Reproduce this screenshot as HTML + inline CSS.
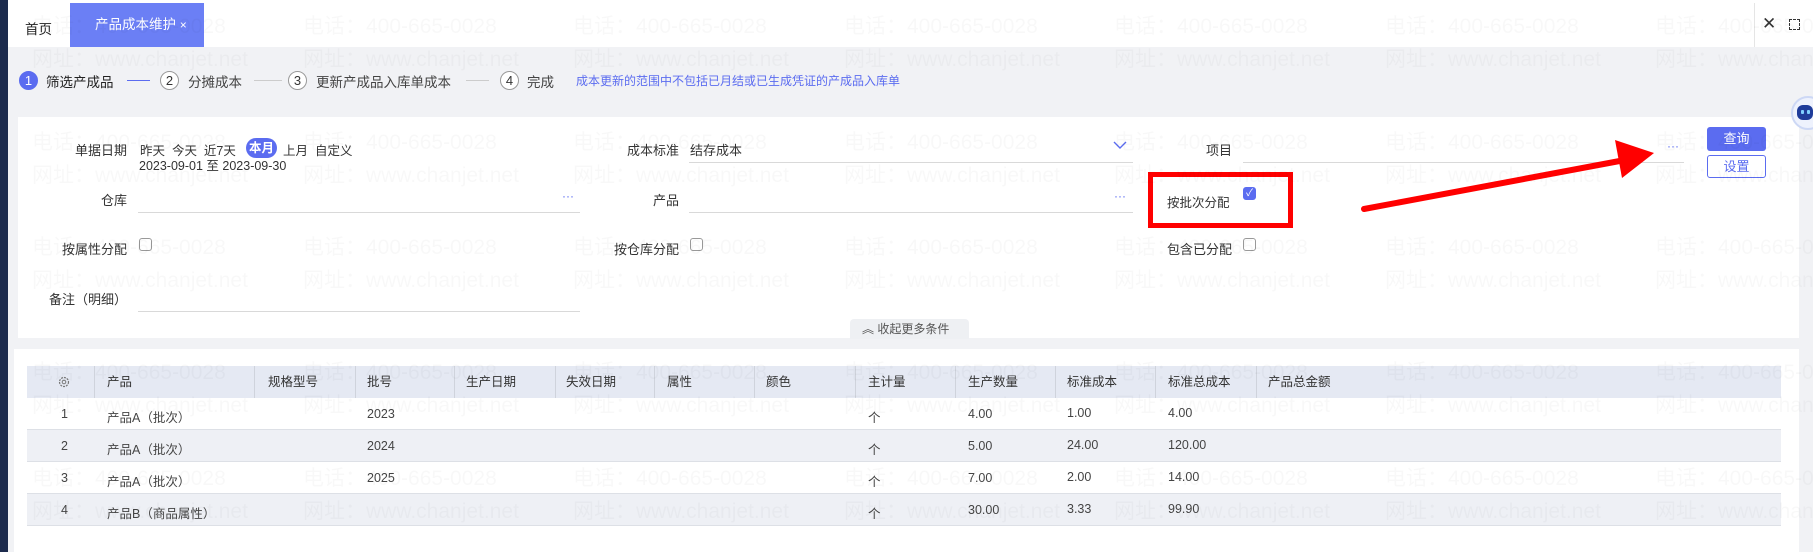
<!DOCTYPE html>
<html><head><meta charset="utf-8"><style>
*{margin:0;padding:0;box-sizing:border-box}
body{width:1813px;height:552px;overflow:hidden;background:#f1f2f5;font-family:"Liberation Sans","Noto Sans CJK SC",sans-serif;font-size:13px;color:#333;position:relative}
.a{position:absolute;white-space:nowrap}
.wm{position:absolute;font-size:21px;color:rgba(0,0,0,0.028);white-space:nowrap;line-height:33px;z-index:5;pointer-events:none}
.lbl{position:absolute;text-align:right;width:120px}
.ul{position:absolute;height:1px;background:#d9d9d9}
.dots{position:absolute;color:#5b6cf0;font-size:12px;letter-spacing:0px}
.cb{position:absolute;width:13px;height:13px;border:1px solid #999;border-radius:3px;background:#fff}
.circ{position:absolute;width:19px;height:19px;border:1px solid #999;border-radius:50%;text-align:center;line-height:17px;font-size:13px;color:#333;top:71px;background:#fff}
.th{position:absolute;top:366px;height:32px;line-height:32px;font-size:12.5px;color:#333}
.bd{position:absolute;top:366px;width:1px;height:32px;background:#cfd3dc}
.td{position:absolute;font-size:12.5px;color:#444}
</style></head><body>
<div class="a" style="left:0;top:0;width:8px;height:552px;background:#1c2b4d"></div>
<div class="a" style="left:8px;top:0;width:1805px;height:47px;background:#fff"></div>
<div class="a" style="left:25px;top:18px;font-size:13.5px;color:#222">首页</div>
<div class="a" style="left:70px;top:3px;width:134px;height:44px;background:#6b7ff5;color:#fff;font-size:13.5px;line-height:44px;padding-left:25px">产品成本维护 <span style="font-size:12px">×</span></div>
<div class="a" style="left:1754px;top:3px;width:1px;height:44px;background:#e5e5e5"></div>
<div class="a" style="left:1762px;top:14px;font-size:17px;color:#333">✕</div>
<div class="a" style="left:1789px;top:19px;width:11px;height:11px;border:1.5px dashed #333"></div>

<!-- steps -->
<div class="circ" style="left:19px;background:#5b6cf0;border-color:#5b6cf0;color:#fff">1</div>
<div class="a" style="left:46px;top:71px;font-size:13.5px;color:#222">筛选产成品</div>
<div class="a" style="left:127px;top:80px;width:23px;height:1px;background:#5b6cf0"></div>
<div class="circ" style="left:160px">2</div>
<div class="a" style="left:188px;top:71px;font-size:13.5px;color:#444">分摊成本</div>
<div class="a" style="left:254px;top:80px;width:28px;height:1px;background:#ccc"></div>
<div class="circ" style="left:288px">3</div>
<div class="a" style="left:316px;top:71px;font-size:13.5px;color:#444">更新产成品入库单成本</div>
<div class="a" style="left:466px;top:80px;width:23px;height:1px;background:#ccc"></div>
<div class="circ" style="left:500px">4</div>
<div class="a" style="left:527px;top:71px;font-size:13.5px;color:#444">完成</div>
<div class="a" style="left:576px;top:72px;font-size:12px;color:#5b6cf0">成本更新的范围中不包括已月结或已生成凭证的产成品入库单</div>

<!-- filter panel -->
<div class="a" style="left:18px;top:117px;width:1781px;height:221px;background:#fff"></div>
<div class="lbl" style="left:7px;top:140px">单据日期</div>
<div class="a" style="left:140px;top:140px;font-size:12.5px;color:#333">昨天&nbsp;&nbsp;今天&nbsp;&nbsp;近7天</div>
<div class="a" style="left:246px;top:138px;width:31px;height:20px;border-radius:10px;background:#5b6cf0;color:#fff;text-align:center;line-height:20px;font-size:12.5px;font-weight:bold">本月</div>
<div class="a" style="left:283px;top:140px;font-size:12.5px">上月&nbsp;&nbsp;自定义</div>
<div class="a" style="left:139px;top:155px;font-size:12.5px">2023-09-01 至 2023-09-30</div>

<div class="lbl" style="left:7px;top:190px">仓库</div>
<div class="ul" style="left:138px;top:212px;width:442px"></div>
<div class="dots" style="left:562px;top:189px">···</div>

<div class="lbl" style="left:559px;top:140px">成本标准</div>
<div class="a" style="left:690px;top:140px">结存成本</div>
<svg class="a" style="left:1113px;top:141px" width="14" height="9"><polyline points="1,1 7,7 13,1" fill="none" stroke="#5b6cf0" stroke-width="1.4"/></svg>
<div class="ul" style="left:689px;top:162px;width:444px"></div>
<div class="lbl" style="left:559px;top:190px">产品</div>
<div class="ul" style="left:689px;top:212px;width:444px"></div>
<div class="dots" style="left:1114px;top:189px">···</div>

<div class="lbl" style="left:1112px;top:140px">项目</div>
<div class="ul" style="left:1243px;top:162px;width:441px"></div>
<div class="dots" style="left:1667px;top:139px">···</div>

<div class="a" style="left:1167px;top:192px;font-size:12.5px">按批次分配</div>
<div class="cb" style="left:1243px;top:187px;background:#5b6cf0;border-color:#5b6cf0;color:#fff;font-size:10px;line-height:11px;text-align:center">✓</div>
<div class="a" style="left:1148px;top:172px;width:145px;height:56px;border:5px solid #f00"></div>

<div class="a" style="left:1707px;top:127px;width:59px;height:24px;background:#5b6cf0;border-radius:3px;color:#fff;text-align:center;line-height:24px">查询</div>
<div class="a" style="left:1707px;top:155px;width:59px;height:23px;border:1px solid #5b6cf0;border-radius:3px;color:#5b6cf0;text-align:center;line-height:21px">设置</div>

<div class="lbl" style="left:7px;top:239px">按属性分配</div>
<div class="cb" style="left:139px;top:238px"></div>
<div class="lbl" style="left:559px;top:239px">按仓库分配</div>
<div class="cb" style="left:690px;top:238px"></div>
<div class="lbl" style="left:1112px;top:239px">包含已分配</div>
<div class="cb" style="left:1243px;top:238px"></div>

<div class="lbl" style="left:7px;top:289px">备注（明细）</div>
<div class="ul" style="left:138px;top:311px;width:442px"></div>

<div class="a" style="left:850px;top:319px;width:119px;height:20px;background:#eef0f3;border-radius:4px 4px 0 0;font-size:12px;color:#555;line-height:20px;padding-left:12px">︽ 收起更多条件</div>

<!-- arrow -->
<svg class="a" style="left:0;top:0;z-index:6" width="1813" height="552"><line x1="1364" y1="209" x2="1625" y2="160" stroke="#f00" stroke-width="6" stroke-linecap="round"/><polygon points="1654,153 1615,140 1622,178" fill="#f00"/></svg>

<!-- robot -->
<div class="a" style="left:1791px;top:96px;width:34px;height:34px;border-radius:50%;background:#eef2fd;border:2px solid #cdd8f5"></div>
<div class="a" style="left:1797px;top:105px;width:16px;height:15px;border-radius:6px;background:#1f3c9a"></div>
<div class="a" style="left:1801px;top:110px;width:3px;height:4px;border-radius:1px;background:#7fd0ff"></div>
<div class="a" style="left:1807px;top:110px;width:3px;height:4px;border-radius:1px;background:#7fd0ff"></div>

<!-- table panel -->
<div class="a" style="left:14px;top:349px;width:1785px;height:203px;background:#fff"></div>
<div class="a" style="left:27px;top:366px;width:1754px;height:32px;background:#e5e9f3"></div>
<div class="a" style="left:27px;top:430px;width:1754px;height:32px;background:#eef0f5"></div>
<div class="a" style="left:27px;top:494px;width:1754px;height:32px;background:#eef0f5"></div>
<div class="a" style="left:27px;top:429px;width:1754px;height:1px;background:#dde0e6"></div>
<div class="a" style="left:27px;top:461px;width:1754px;height:1px;background:#dde0e6"></div>
<div class="a" style="left:27px;top:493px;width:1754px;height:1px;background:#dde0e6"></div>
<div class="a" style="left:27px;top:525px;width:1754px;height:1px;background:#dde0e6"></div>
<svg class="a" style="left:58px;top:376px" width="12" height="12"><circle cx="6" cy="6" r="4.5" fill="none" stroke="#777" stroke-width="1.2" stroke-dasharray="2 1"/><circle cx="6" cy="6" r="1.8" fill="none" stroke="#777" stroke-width="1"/></svg>
<div class="bd" style="left:94px"></div><div class="th" style="left:107px">产品</div>
<div class="bd" style="left:254px"></div><div class="th" style="left:268px">规格型号</div>
<div class="bd" style="left:355px"></div><div class="th" style="left:367px">批号</div>
<div class="bd" style="left:454px"></div><div class="th" style="left:466px">生产日期</div>
<div class="bd" style="left:555px"></div><div class="th" style="left:566px">失效日期</div>
<div class="bd" style="left:654px"></div><div class="th" style="left:667px">属性</div>
<div class="bd" style="left:754px"></div><div class="th" style="left:766px">颜色</div>
<div class="bd" style="left:855px"></div><div class="th" style="left:868px">主计量</div>
<div class="bd" style="left:955px"></div><div class="th" style="left:968px">生产数量</div>
<div class="bd" style="left:1055px"></div><div class="th" style="left:1067px">标准成本</div>
<div class="bd" style="left:1155px"></div><div class="th" style="left:1168px">标准总成本</div>
<div class="bd" style="left:1256px"></div><div class="th" style="left:1268px">产品总金额</div>

<div class="td" style="left:61px;top:407px">1</div><div class="td" style="left:107px;top:407px">产品A（批次）</div><div class="td" style="left:367px;top:407px">2023</div><div class="td" style="left:868px;top:407px">个</div><div class="td" style="left:968px;top:407px">4.00</div><div class="td" style="left:1067px;top:406px">1.00</div><div class="td" style="left:1168px;top:406px">4.00</div>
<div class="td" style="left:61px;top:439px">2</div><div class="td" style="left:107px;top:439px">产品A（批次）</div><div class="td" style="left:367px;top:439px">2024</div><div class="td" style="left:868px;top:439px">个</div><div class="td" style="left:968px;top:439px">5.00</div><div class="td" style="left:1067px;top:438px">24.00</div><div class="td" style="left:1168px;top:438px">120.00</div>
<div class="td" style="left:61px;top:471px">3</div><div class="td" style="left:107px;top:471px">产品A（批次）</div><div class="td" style="left:367px;top:471px">2025</div><div class="td" style="left:868px;top:471px">个</div><div class="td" style="left:968px;top:471px">7.00</div><div class="td" style="left:1067px;top:470px">2.00</div><div class="td" style="left:1168px;top:470px">14.00</div>
<div class="td" style="left:61px;top:503px">4</div><div class="td" style="left:107px;top:503px">产品B（商品属性）</div><div class="td" style="left:868px;top:503px">个</div><div class="td" style="left:968px;top:503px">30.00</div><div class="td" style="left:1067px;top:502px">3.33</div><div class="td" style="left:1168px;top:502px">99.90</div>

<!-- watermarks -->
<div class="wm" style="left:32px;top:10px">电话：400-665-0028<br>网址：www.chanjet.net</div>
<div class="wm" style="left:303px;top:10px">电话：400-665-0028<br>网址：www.chanjet.net</div>
<div class="wm" style="left:573px;top:10px">电话：400-665-0028<br>网址：www.chanjet.net</div>
<div class="wm" style="left:844px;top:10px">电话：400-665-0028<br>网址：www.chanjet.net</div>
<div class="wm" style="left:1114px;top:10px">电话：400-665-0028<br>网址：www.chanjet.net</div>
<div class="wm" style="left:1385px;top:10px">电话：400-665-0028<br>网址：www.chanjet.net</div>
<div class="wm" style="left:1655px;top:10px">电话：400-665-0028<br>网址：www.chanjet.net</div>
<div class="wm" style="left:32px;top:126px">电话：400-665-0028<br>网址：www.chanjet.net</div>
<div class="wm" style="left:303px;top:126px">电话：400-665-0028<br>网址：www.chanjet.net</div>
<div class="wm" style="left:573px;top:126px">电话：400-665-0028<br>网址：www.chanjet.net</div>
<div class="wm" style="left:844px;top:126px">电话：400-665-0028<br>网址：www.chanjet.net</div>
<div class="wm" style="left:1114px;top:126px">电话：400-665-0028<br>网址：www.chanjet.net</div>
<div class="wm" style="left:1385px;top:126px">电话：400-665-0028<br>网址：www.chanjet.net</div>
<div class="wm" style="left:1655px;top:126px">电话：400-665-0028<br>网址：www.chanjet.net</div>
<div class="wm" style="left:32px;top:231px">电话：400-665-0028<br>网址：www.chanjet.net</div>
<div class="wm" style="left:303px;top:231px">电话：400-665-0028<br>网址：www.chanjet.net</div>
<div class="wm" style="left:573px;top:231px">电话：400-665-0028<br>网址：www.chanjet.net</div>
<div class="wm" style="left:844px;top:231px">电话：400-665-0028<br>网址：www.chanjet.net</div>
<div class="wm" style="left:1114px;top:231px">电话：400-665-0028<br>网址：www.chanjet.net</div>
<div class="wm" style="left:1385px;top:231px">电话：400-665-0028<br>网址：www.chanjet.net</div>
<div class="wm" style="left:1655px;top:231px">电话：400-665-0028<br>网址：www.chanjet.net</div>
<div class="wm" style="left:32px;top:356px">电话：400-665-0028<br>网址：www.chanjet.net</div>
<div class="wm" style="left:303px;top:356px">电话：400-665-0028<br>网址：www.chanjet.net</div>
<div class="wm" style="left:573px;top:356px">电话：400-665-0028<br>网址：www.chanjet.net</div>
<div class="wm" style="left:844px;top:356px">电话：400-665-0028<br>网址：www.chanjet.net</div>
<div class="wm" style="left:1114px;top:356px">电话：400-665-0028<br>网址：www.chanjet.net</div>
<div class="wm" style="left:1385px;top:356px">电话：400-665-0028<br>网址：www.chanjet.net</div>
<div class="wm" style="left:1655px;top:356px">电话：400-665-0028<br>网址：www.chanjet.net</div>
<div class="wm" style="left:32px;top:462px">电话：400-665-0028<br>网址：www.chanjet.net</div>
<div class="wm" style="left:303px;top:462px">电话：400-665-0028<br>网址：www.chanjet.net</div>
<div class="wm" style="left:573px;top:462px">电话：400-665-0028<br>网址：www.chanjet.net</div>
<div class="wm" style="left:844px;top:462px">电话：400-665-0028<br>网址：www.chanjet.net</div>
<div class="wm" style="left:1114px;top:462px">电话：400-665-0028<br>网址：www.chanjet.net</div>
<div class="wm" style="left:1385px;top:462px">电话：400-665-0028<br>网址：www.chanjet.net</div>
<div class="wm" style="left:1655px;top:462px">电话：400-665-0028<br>网址：www.chanjet.net</div>
</body></html>
